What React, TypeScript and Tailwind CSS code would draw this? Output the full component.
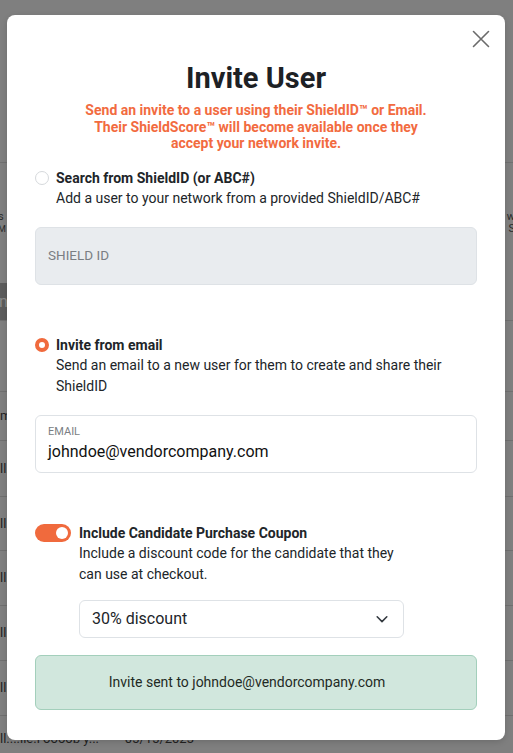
import React from "react";

function BgRow({ h, left, right }: { h: string; left?: string; right?: string }) {
  return (
    <div className={`${h} border-b border-[#6f6f6f] flex items-center justify-between`}>
      <span className="text-[13px] text-[#222] whitespace-pre leading-[14px]">{left}</span>
      <span className="text-[13px] text-[#222] whitespace-pre leading-[14px]">{right}</span>
    </div>
  );
}

export default function App() {
  return (
    <div
      className="relative w-[513px] h-[753px] overflow-hidden bg-[#7f7f7f]"
      style={{ fontFamily: "Roboto, 'Noto Sans', sans-serif" }}
    >
      {/* background page */}
      <div className="flex flex-col">
        <div className="h-[163px] border-b border-[#707070]" />
        <div className="h-[120px] flex items-center justify-between">
          <div className="flex flex-col -ml-[2px]">
            <span className="text-[11px] leading-[12px] text-[#2a2a2a]">s</span>
            <span className="text-[9px] leading-[12px] text-[#2a2a2a]">M</span>
          </div>
          <div className="flex flex-col items-end -mr-[2px]">
            <span className="text-[11px] leading-[12px] text-[#2a2a2a]">w</span>
            <span className="text-[11px] leading-[12px] text-[#2a2a2a]">S</span>
          </div>
        </div>
        <div className="h-[38px] border-b border-[#707070] flex items-center">
          <div className="h-full w-[120px] bg-[#5c5c5c] flex items-center">
            <span className="text-[16px] text-[#8a8a8a] -ml-[1px]">na</span>
          </div>
        </div>
        <div className="h-[71px] border-b border-[#707070]" />
        <BgRow h="h-[49px]" left="m" />
        <BgRow h="h-[56px]" left="ll." />
        <BgRow h="h-[54px]" left="ll." />
        <BgRow h="h-[55px]" left="ll." />
        <BgRow h="h-[55px]" left="ll." />
        <BgRow h="h-[55px]" left="ll." />
        <div className="h-[40px] pt-[16px] text-[13px] text-[#222] whitespace-pre leading-[14px]">
          {"ll....lle.l oooob y...        05/15/2023"}
        </div>
      </div>

      {/* modal */}
      <div className="absolute left-[7px] top-[15px] w-[498px] h-[725px] bg-white rounded-[8px] shadow-[0_2px_6px_rgba(0,0,0,0.15)] px-[28px] pt-[14px]">
        <div className="flex justify-end -mr-[13px]">
          <svg width="18" height="18" viewBox="0 0 18 18" className="mt-[1px]">
            <path d="M1.5 1.5 L16.5 16.5 M16.5 1.5 L1.5 16.5" stroke="#6b6b6b" strokeWidth="1.6" strokeLinecap="round" />
          </svg>
        </div>
        <h1 className="text-center text-[29px] font-bold text-[#1d2125] leading-[34px] mt-[13px]">Invite User</h1>
        <p className="text-center text-[14px] font-bold text-[#f26b3f] leading-[16.5px] mt-[7px] px-[40px]">
          Send an invite to a user using their ShieldID™ or Email. Their ShieldScore™ will become available once they accept your network invite.
        </p>

        {/* option 1 */}
        <div className="flex gap-[7px] mt-[18px]">
          <div className="w-[14px] h-[14px] rounded-full border border-[#d6d9dc] bg-white mt-[1px] shrink-0" />
          <div className="flex flex-col">
            <span className="text-[14px] font-bold text-[#212529] leading-[16px]">Search from ShieldID (or ABC#)</span>
            <span className="text-[14px] text-[#212529] leading-[21px] mt-[2px]">Add a user to your network from a provided ShieldID/ABC#</span>
          </div>
        </div>
        <div className="mt-[18px] h-[58px] rounded-[6px] bg-[#e9ecef] border border-[#dee2e6] flex items-center px-[12px]">
          <span className="text-[13.5px] text-[#7a7e83]">SHIELD ID</span>
        </div>

        {/* option 2 */}
        <div className="flex gap-[7px] mt-[52px]">
          <div className="w-[14px] h-[14px] rounded-full border-[4px] border-[#f06a3d] bg-white mt-[1px] shrink-0" />
          <div className="flex flex-col">
            <span className="text-[14px] font-bold text-[#212529] leading-[16px]">Invite from email</span>
            <span className="text-[14px] text-[#212529] leading-[21px] mt-[2px]">
              Send an email to a new user for them to create and share their ShieldID
            </span>
          </div>
        </div>
        <div className="mt-[18px] h-[58px] rounded-[6px] bg-white border border-[#dee2e6] flex flex-col px-[12px] pt-[9px]">
          <span className="text-[11px] text-[#7a7e83] leading-[13px]">EMAIL</span>
          <span className="text-[16px] text-[#111] leading-[20px] mt-[4px]">johndoe@vendorcompany.com</span>
        </div>

        {/* toggle */}
        <div className="flex gap-[8px] mt-[51px]">
          <div className="w-[36px] h-[18px] rounded-full bg-[#f06a3d] flex items-center justify-end px-[3px] shrink-0">
            <div className="w-[12px] h-[12px] rounded-full bg-white" />
          </div>
          <div className="flex flex-col">
            <span className="text-[14px] font-bold text-[#212529] leading-[16px] mt-[1px]">Include Candidate Purchase Coupon</span>
            <span className="text-[14px] text-[#212529] leading-[21px] mt-[2px] w-[330px]">
              Include a discount code for the candidate that they can use at checkout.
            </span>
            <div className="mt-[15px] w-[325px] h-[38px] rounded-[6px] border border-[#dee2e6] bg-white flex items-center justify-between pl-[12px] pr-[14px]">
              <span className="text-[16px] text-[#212529]">30% discount</span>
              <svg width="14" height="14" viewBox="0 0 16 16">
                <path d="M2.5 5.5 L8 11 L13.5 5.5" fill="none" stroke="#343a40" strokeWidth="1.8" strokeLinecap="round" strokeLinejoin="round" />
              </svg>
            </div>
          </div>
        </div>

        <div className="mt-[17px] h-[55px] rounded-[6px] bg-[#d1e7dd] border border-[#a3cfbb] flex items-center justify-center pr-[18px]">
          <span className="text-[14px] text-[#1f2a24]">Invite sent to johndoe@vendorcompany.com</span>
        </div>
      </div>
    </div>
  );
}
